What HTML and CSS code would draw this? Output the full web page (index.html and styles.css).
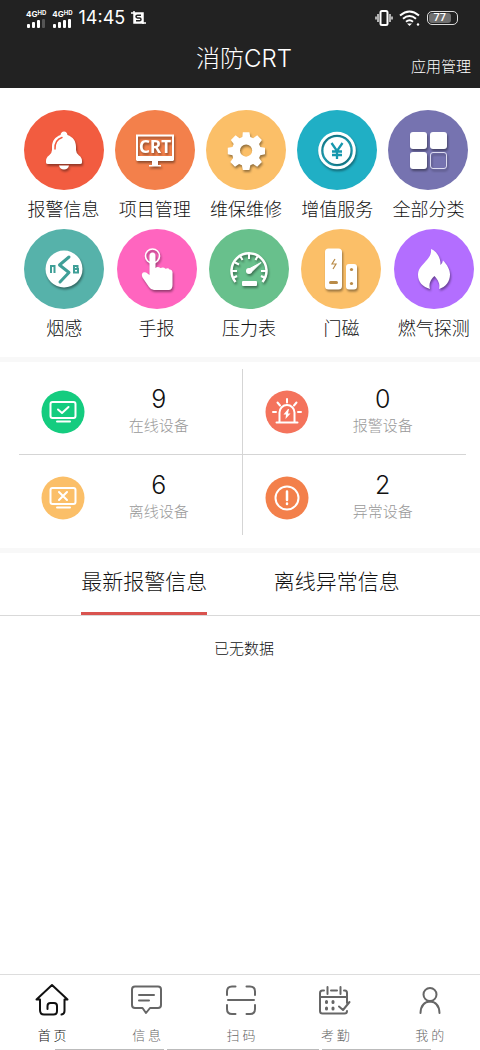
FILE: index.html
```html
<!DOCTYPE html>
<html lang="zh-CN">
<head>
<meta charset="utf-8">
<meta name="viewport" content="width=device-width, initial-scale=1">
<title>消防CRT</title>
<link rel="stylesheet" href="styles.css">
</head>
<body>
<header class="header">
  <div class="status">
    <div class="status-side">
      <div class="signal">
        <span class="network">4G<small>HD</small></span>
        <svg width="20" height="9" viewBox="0 0 20 9" fill="#fff" aria-hidden="true"><rect x="1" y="5" width="3" height="4" rx="1"/><rect x="6" y="3" width="3" height="6" rx="1"/><rect x="11" y="1" width="3" height="8" rx="1"/><rect x="16" y="0" width="3" height="9" rx="1" fill="#555"/></svg>
      </div>
      <div class="signal">
        <span class="network">4G<small>HD</small></span>
        <svg width="20" height="9" viewBox="0 0 20 9" fill="#fff" aria-hidden="true"><rect x="1" y="5" width="3" height="4" rx="1"/><rect x="6" y="3" width="3" height="6" rx="1"/><rect x="11" y="1" width="3" height="8" rx="1"/><rect x="16" y="0" width="3" height="9" rx="1"/></svg>
      </div>
      <time class="clock">14:45</time>
      <svg width="15" height="15" viewBox="0 0 15 15" aria-hidden="true"><path d="M0 2h12v11M3 0v12h12" fill="none" stroke="#fff" stroke-width="1.5"/><path d="M3 2h9v10H3z" fill="#fff"/><path d="M10 4.300H6.500q-1.500 0-1.500 1.300T6.500 7h2Q10 7 10 8.400T8.500 9.800H5" fill="none" stroke="#222" stroke-width="1.500"/></svg>
    </div>
    <div class="status-side">
      <svg width="18" height="18" viewBox="0 0 18 18" fill="none" stroke="#fff" aria-hidden="true"><rect x="5.500" y="2" width="7" height="14" rx="1.500" stroke-width="2"/><path d="M3 5v8M15 5v8M1 7.500v3M17 7.500v3" stroke-width="1.300"/></svg>
      <svg width="22" height="18" viewBox="0 0 22 18" fill="none" stroke="#fff" stroke-width="2" aria-hidden="true"><path d="M1 6.500q9.500-8 19 0M4 9.700q6.500-5.500 13 0M7 12.700q3.500-2.800 7 0"/><path d="M8 14.500h5l-2.500 2.500z" fill="#fff" stroke="none"/><circle cx="19" cy="15.500" r="1.200" fill="#fff" stroke="none"/></svg>
      <div class="battery"><span>77</span></div>
    </div>
  </div>
  <div class="titlebar">
    <h1>消防CRT</h1>
    <a class="manage" href="#manage">应用管理</a>
  </div>
</header>

<main class="main">
  <section class="apps">
    <div class="app-row app-row-first">
      <a class="app" href="#alarm">
        <svg viewBox="0 0 80 80" aria-hidden="true"><circle cx="40" cy="40" r="40" fill="#f25c40"/><g class="glyph" fill="#fff"><path d="M40 21.500q3 0 3.500 3.500C49 27 52 31 52 37v3q0 3 3 5.500 3 2 3 5.500v1.500q0 1.500-2 1.500H24q-2 0-2-1.500V51q0-3.500 3-5.500 3-2.500 3-5.500v-3c0-6 3-10 8.500-12q.5-3.500 3.500-3.500z"/><path d="M35 55.500h10q-1 4-5 4t-5-4z"/></g><path d="M31 39q-.5-9 7-11.500" fill="none" stroke="#f25c40" stroke-width="1.500" stroke-linecap="round"/></svg>
        <span>报警信息</span></a>
      <a class="app" href="#project">
        <svg viewBox="0 0 80 80" aria-hidden="true"><circle cx="40" cy="40" r="40" fill="#f3804b"/><g class="glyph"><path d="M22 25.500h36v24H22z" fill="none" stroke="#fff" stroke-width="2"/><path d="M22 46h36v5H22zM37 51h6v4h3v1.500H34V55h3z" fill="#fff"/><text x="40" y="43" text-anchor="middle" class="crt">CRT</text></g></svg>
        <span>项目管理</span></a>
      <a class="app" href="#repair">
        <svg viewBox="0 0 80 80" aria-hidden="true"><circle cx="40" cy="40" r="40" fill="#fbbf68"/><g class="glyph"><path transform="translate(2.500 2) scale(.94)" fill="#fff" fill-rule="evenodd" d="M36.500 21.500h7l1 5 3 1.300 4.300-3 5 5-3 4.200 1.300 3.200 5 .8v7l-5 1-1.300 3 3 4.300-5 5-4.300-3-3 1.300-1 5h-7l-1-5-3-1.300-4.300 3-5-5 3-4.300L25.500 46l-5-1v-7l5-.8 1.300-3.200-3-4.200 5-5 4.300 3 2.900-1.300zM40 34.500a6.500 6.500 0 1 0 0 13 6.500 6.500 0 1 0 0-13z"/></g></svg>
        <span>维保维修</span></a>
      <a class="app" href="#service">
        <svg viewBox="0 0 80 80" aria-hidden="true"><circle cx="40" cy="40" r="40" fill="#20afc5"/><g class="glyph"><circle cx="40" cy="40.500" r="17.300" fill="none" stroke="#fff" stroke-width="3"/><circle cx="40" cy="40.500" r="13.500" fill="#fff"/></g><path d="M34.500 33l5.500 8 5.500-8M35 41.500h10M35 45h10M40 41v8" fill="none" stroke="#1797ad" stroke-width="2.300"/></svg>
        <span>增值服务</span></a>
      <a class="app" href="#all">
        <svg viewBox="0 0 80 80" aria-hidden="true"><circle cx="40" cy="40" r="40" fill="#7673b0"/><g class="glyph" fill="#fff"><rect x="22" y="22" width="17" height="17" rx="3"/><rect x="42" y="22" width="17" height="17" rx="3"/><rect x="22" y="42" width="17" height="17" rx="3"/><rect x="42.500" y="42.500" width="16" height="16" rx="2.500" fill="none" stroke="#dddcf0"/></g></svg>
        <span>全部分类</span></a>
    </div>
    <div class="app-row">
      <a class="app" href="#smoke">
        <svg viewBox="0 0 80 80" aria-hidden="true"><circle cx="40" cy="40" r="40" fill="#56b2aa"/><circle class="glyph" cx="40" cy="40" r="18.500" fill="#fff"/><path d="M45 28l-9.500 8 9.500 7.500L36 53" fill="none" stroke="#3f9f97" stroke-width="3" stroke-linecap="round" stroke-linejoin="round"/><path d="M27 44v-7h3.500v7M50 37h3.500v3H50zM50 40h4v3.500h-4z" fill="none" stroke="#3f9f97" stroke-width="2"/></svg>
        <span>烟感</span></a>
      <a class="app" href="#manual">
        <svg viewBox="0 0 80 80" aria-hidden="true"><circle cx="40" cy="40" r="40" fill="#ff65bf"/><g class="glyph"><circle cx="35.500" cy="27" r="7" fill="none" stroke="#fff" stroke-width="1.600"/><path fill="#fff" d="M32.500 27q0-3.500 3-3.500t3 3.500v12q2-2 5 0 3-1.500 5 .8 3-1.300 4 .7 2.500-.5 3 2.500v13q0 5-4 5H37q-3 0-5-3l-6.500-9.500Q24 45 26 43.500q2.500-1 4.500 1l2 1.500z"/></g></svg>
        <span>手报</span></a>
      <a class="app" href="#pressure">
        <svg viewBox="0 0 80 80" aria-hidden="true"><circle cx="40" cy="40" r="40" fill="#68c08c"/><g class="glyph" fill="none" stroke="#fff"><path d="M26.500 53A17.500 17.500 0 1 1 53.500 53" stroke-width="2.500"/><path d="M40 25v5M31.500 27.500l2 3.500M48.500 27.500l-2 3.500M26 33.500l4 2M23 42h5M52 42h5M24 49l4-2M56 49l-4-2" stroke-width="2"/><path d="M39 40.500l13-7-10.500 10.500z" fill="#fff"/><circle cx="40" cy="42" r="3" fill="#fff" stroke="none"/><rect x="33" y="52" width="15" height="5" rx="1" fill="#fff" stroke="none"/></g></svg>
        <span>压力表</span></a>
      <a class="app" href="#door">
        <svg viewBox="0 0 80 80" aria-hidden="true"><circle cx="40" cy="40" r="40" fill="#fbbf68"/><g class="glyph" fill="#fff"><rect x="24" y="19.500" width="17" height="41" rx="3.500"/><rect x="45" y="35" width="11" height="25.500" rx="3"/></g><path d="M34 30l-3 5h4l-3 5" fill="none" stroke="#b98b48" stroke-width="1.200"/><rect x="28" y="52" width="9" height="3" rx="1.500" fill="#b98b48"/><circle cx="50.500" cy="40.500" r="1.600" fill="#b98b48"/><circle cx="50.500" cy="54.500" r="1.600" fill="#b98b48"/></svg>
        <span>门磁</span></a>
      <a class="app" href="#gas">
        <svg viewBox="0 0 80 80" aria-hidden="true"><circle cx="40" cy="40" r="40" fill="#b36eff"/><path class="glyph" fill="#fff" d="M37 20c5 2 10 8 9.500 16q2-1.500 2.500-4.500c4 4 7 9 7 14 0 7-4.500 12.500-11 14.500 1.500-5-1-9-4.500-13-4 3.500-6 8-4.500 13-7-2-12-7-12-14 0-6 3.500-9 7.500-13.500 4-4 6-7.500 5.500-12.500z"/></svg>
        <span>燃气探测</span></a>
    </div>
  </section>

  <section class="stats">
    <div class="stat-grid">
      <div class="stat">
        <svg viewBox="0 0 44 44" aria-hidden="true"><circle cx="22" cy="22" r="21.500" fill="#14cc7f"/><g class="line"><rect x="9.500" y="12" width="25" height="16" rx="2"/><path d="M16 31.500h13M17 19.500l4 3.500 6.500-6"/></g></svg>
        <div class="stat-text"><strong>9</strong><span>在线设备</span></div>
      </div>
      <div class="stat">
        <svg viewBox="0 0 44 44" aria-hidden="true"><circle cx="22" cy="22" r="21.500" fill="#f4735c"/><g class="line"><path d="M11.500 32.500h21M14.500 32V22.500a7.500 7.500 0 0 1 15 0V32M22 9v3.500M12.500 12.500l2.500 3M31.500 12.500l-2.500 3M8 22h3M33 22h3"/></g><path d="M23 19l-4.500 5.500h2.500L20.500 29l5-5.500h-2.500l1-4.500z" fill="#fff"/></svg>
        <div class="stat-text"><strong>0</strong><span>报警设备</span></div>
      </div>
      <div class="stat">
        <svg viewBox="0 0 44 44" aria-hidden="true"><circle cx="22" cy="22" r="21.500" fill="#fbbf68"/><g class="line"><rect x="9.500" y="12" width="25" height="16" rx="2"/><path d="M16 31.500h13M18 16l8 8M26 16l-8 8"/></g></svg>
        <div class="stat-text"><strong>6</strong><span>离线设备</span></div>
      </div>
      <div class="stat">
        <svg viewBox="0 0 44 44" aria-hidden="true"><circle cx="22" cy="22" r="21.500" fill="#f3804b"/><g class="line"><circle cx="22" cy="22" r="11.500"/><path d="M22 15.500v8.500M22 27.500v.5" stroke-width="2.500"/></g></svg>
        <div class="stat-text"><strong>2</strong><span>异常设备</span></div>
      </div>
    </div>
  </section>

  <section class="messages">
    <div class="tabs" role="tablist">
      <button class="tab tab-active" role="tab" aria-selected="true" type="button"><span>最新报警信息</span></button>
      <button class="tab" role="tab" aria-selected="false" type="button"><span>离线异常信息</span></button>
    </div>
    <p class="empty">已无数据</p>
  </section>
</main>

<footer class="footer">
  <nav class="nav">
    <a class="nav-item nav-current" href="#home"><svg viewBox="0 0 36 36" aria-hidden="true"><path d="M5.500 17.500H2.500L18 3l15.500 14.500h-3V29q0 3-3 3.500M6 17.500V28q0 4.500 4 4.500h9.500q3.500 0 3.500-3.500v-5q0-3-3-3h-3.500q-3 0-3 3v3"/></svg><span>首 页</span></a>
    <a class="nav-item" href="#message"><svg viewBox="0 0 36 36" aria-hidden="true"><path d="M6 4.500h23q3 0 3 3V23q0 3-3 3h-8l-4 5-3.500-5H6q-3 0-3-3V7.500q0-3 3-3zM10 13h15M10 18.500h10"/></svg><span>信 息</span></a>
    <a class="nav-item" href="#scan"><svg viewBox="0 0 36 36" aria-hidden="true"><path d="M12.500 4.500H9q-5 0-5 5V13M23.500 4.500H27q5 0 5 5V13M12.500 32H9q-5 0-5-5v-4M23.500 32H27q5 0 5-5v-4M5 18h26"/></svg><span>扫 码</span></a>
    <a class="nav-item" href="#attendance"><svg viewBox="0 0 36 36" aria-hidden="true"><path d="M7 8.500H5.500Q3 8.500 3 11v18q0 2.500 2.500 2.500h22q2.500 0 2.500-2.500M14 8.500h6M27 8.500h1q2 0 2 2.500v10M3 15h27M10.500 5v7M23.500 5v7M22 24.500l4 3.500 6.500-8"/><path d="M9.500 19.500v1M16 19.500v1M9.500 26v1M16 26v1" stroke-width="3"/></svg><span>考 勤</span></a>
    <a class="nav-item" href="#mine"><svg viewBox="0 0 36 36" aria-hidden="true"><circle cx="18" cy="12.500" r="6.500"/><path d="M8.500 31q.5-11 9.500-11.500Q27 20 27.500 31"/></svg><span>我 的</span></a>
  </nav>
  <div class="handles"><i></i><i></i><i></i></div>
</footer>
</body>
</html>
```
FILE: styles.css
```css
* {
  box-sizing: border-box;
}

body {
  display: flex;
  flex-direction: column;
  min-height: 100vh;
  margin: 0;
  background: #fff;
  color: #111;
  font-family: "Noto Sans CJK SC", "Noto Sans", sans-serif;
  font-size: 15px;
  font-weight: 300;
  line-height: 24px;
}

a {
  color: inherit;
  text-decoration: none;
}

svg {
  display: block;
  flex: none;
}

.header {
  padding-bottom: 10px;
  background: #222;
  color: #fff;
}

.status {
  display: flex;
  justify-content: space-between;
  height: 40px;
  padding: 0 22px 4px 26px;
}

.status-side {
  display: flex;
  align-items: center;
  gap: 6px;
}

.network {
  display: block;
  font: 700 8px/8px Inter, sans-serif;
}

.network small {
  font-size: 6px;
  vertical-align: 2px;
}

.signal {
  display: flex;
  flex-direction: column;
  gap: 1px;
}

.clock {
  font: 400 18px/24px Inter, sans-serif;
}

.battery {
  display: flex;
  width: 31px;
  height: 14px;
  padding: 1px;
  border: 1px solid #ddd;
  border-radius: 5px;
}

.battery span {
  width: 80%;
  border-radius: 3px;
  background: #707070;
  font: 500 11px/10px Roboto, sans-serif;
  text-align: center;
}

.titlebar {
  display: grid;
  grid-template-columns: 1fr auto 1fr;
  align-items: end;
  padding: 0 9px 0 17px;
}

.titlebar h1 {
  grid-column: 2;
  margin: 0;
  font-family: Inter, "Noto Sans CJK SC", sans-serif;
  font-size: 24px;
  font-weight: 300;
  line-height: 38px;
}

.manage {
  justify-self: end;
}

.main {
  flex: 1;
}

.apps {
  padding: 22px 0 9px 18px;
}

.app-row {
  display: grid;
  grid-template-columns: repeat(5, 1fr);
}

.app-row-first {
  padding-right: 6px;
}

.app {
  display: flex;
  flex-direction: column;
  align-items: center;
  height: 119px;
  font-size: 18px;
  line-height: 36px;
  white-space: nowrap;
}

.app svg {
  width: 80px;
  height: 80px;
}

.glyph {
  filter: drop-shadow(1px 2px 1px rgba(0, 0, 0, 0.4));
}

.crt {
  fill: #fff;
  font: 700 17px "Noto Sans", sans-serif;
}

.stats {
  padding: 7px 14px 13px 19px;
  border: solid #f8f8f8;
  border-width: 5px 0;
}

.stat-grid {
  display: grid;
  grid-template-columns: 1fr 1fr;
}

.stat {
  display: flex;
  align-items: center;
  gap: 12px;
  padding: 16px 0 10px 22px;
}

.stat:nth-child(-n + 2) {
  padding-bottom: 15px;
  border-bottom: 1px solid #d5d5d5;
}

.stat:nth-child(odd) {
  border-right: 1px solid #d5d5d5;
}

.stat svg {
  width: 44px;
  height: 44px;
}

.line {
  fill: none;
  stroke: #fff;
  stroke-width: 2;
  stroke-linecap: round;
  stroke-linejoin: round;
}

.stat-text {
  display: flex;
  flex: 1;
  flex-direction: column;
  align-items: center;
  padding-right: 21px;
  color: #999;
}

.stat-text strong {
  color: #111;
  font-family: Inter, sans-serif;
  font-size: 25px;
  font-weight: 300;
  line-height: 28px;
}

.stat-text span {
  padding-bottom: 2px;
}

.tabs {
  display: flex;
  padding: 0 47px 0 48px;
  border-bottom: 1px solid #d9d9d9;
}

.tab {
  flex: 1;
  padding: 0;
  border: 0;
  background: none;
  color: inherit;
  font: inherit;
  font-size: 21px;
  line-height: 55px;
}

.tab span {
  display: inline-block;
  padding-bottom: 4px;
  border-bottom: 3px solid transparent;
}

.tab-active span {
  border-color: #d9534f;
}

.empty {
  margin: 20px 0;
  padding-left: 8px;
  text-align: center;
}

.footer {
  border-top: 1px solid #ddd;
}

.nav {
  display: grid;
  grid-template-columns: repeat(5, 1fr);
  padding: 7px 3px 0 5px;
}

.nav-item {
  display: flex;
  flex-direction: column;
  align-items: center;
  gap: 3px;
  color: #666;
  font-size: 13px;
  line-height: 28px;
}

.nav-current {
  color: #111;
}

.nav-item svg {
  width: 36px;
  height: 36px;
  fill: none;
  stroke: currentColor;
  stroke-width: 2;
  stroke-linecap: round;
  stroke-linejoin: round;
}

.handles {
  display: grid;
  grid-template-columns: 5fr 7fr 5fr;
  gap: 3px;
  padding: 0 49px 0 55px;
}

.handles i {
  height: 1px;
  background: #bbb;
}
```
